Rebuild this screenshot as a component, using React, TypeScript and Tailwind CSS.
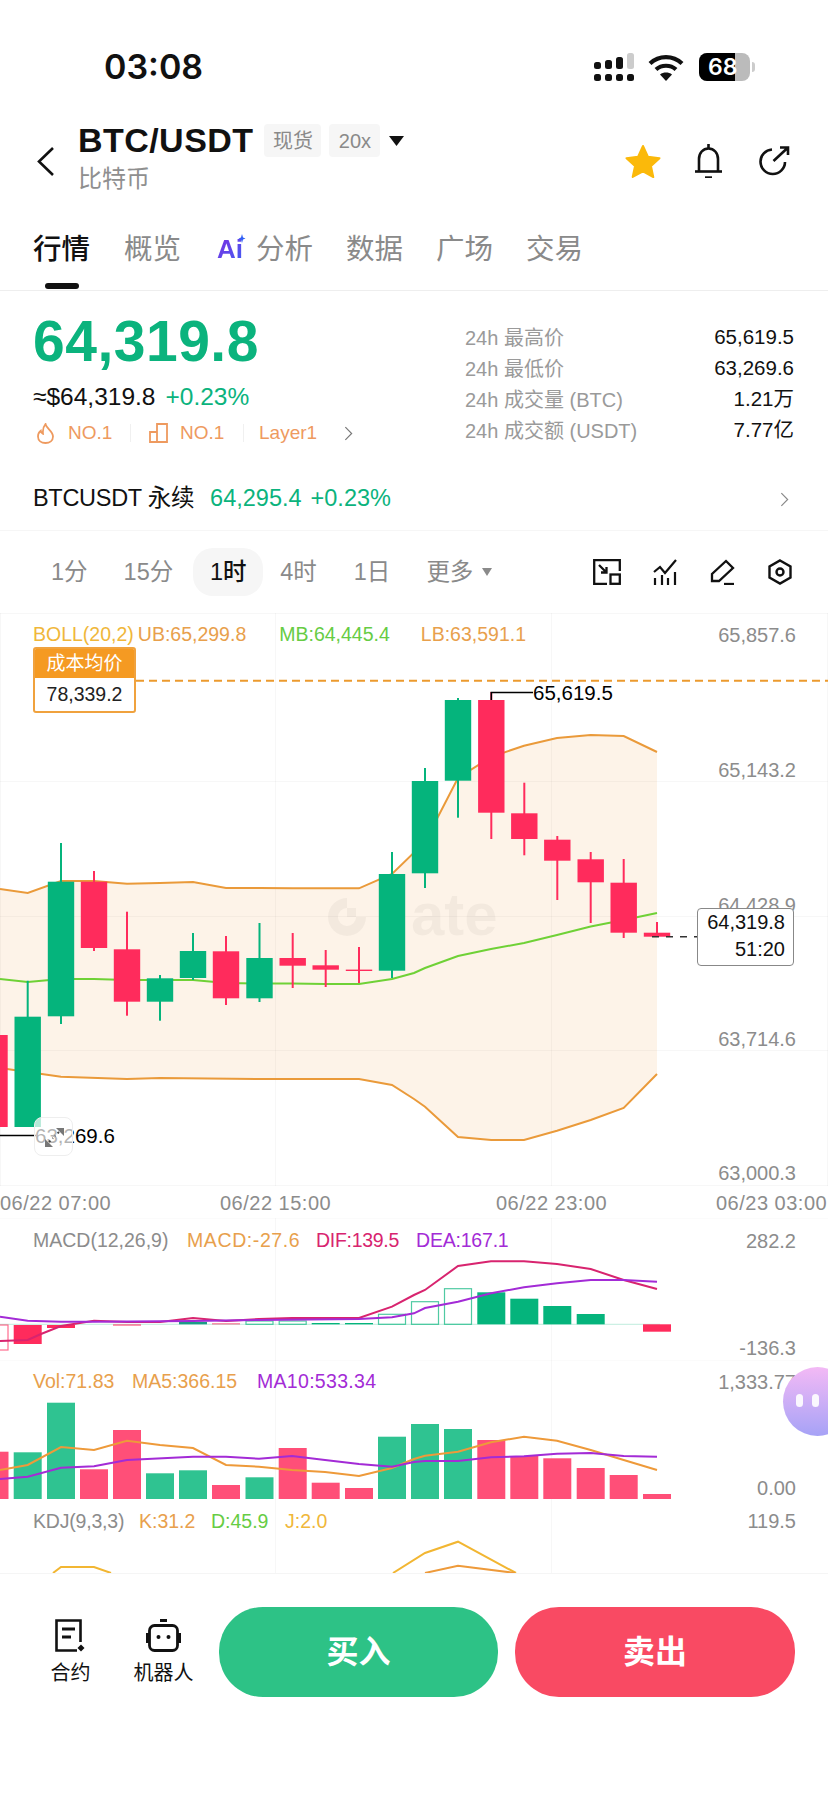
import { ReactNode } from "react";

const GREEN = "#05b47c";
const RED = "#ff2b5c";

// x, up?, bodyTop, bodyBottom, wickTop, wickBottom (page pixels)
const candles: [number, boolean, number, number, number, number][] = [
  [-5.5, false, 1035, 1127, 1030, 1135],
  [27.7, true, 1016.7, 1127, 980.7, 1127],
  [61, true, 881.7, 1016.3, 843, 1024],
  [94, false, 881.7, 948, 871, 951],
  [127, false, 949.3, 1001.7, 911.7, 1015.7],
  [160, true, 978.3, 1001.7, 975, 1020.7],
  [193, true, 951, 978, 933, 980],
  [226, false, 951.3, 998.3, 936, 1005],
  [259.5, true, 958, 998.3, 923, 1002],
  [292.7, false, 958, 965.7, 933, 988],
  [325.7, false, 965.3, 969.7, 950, 987],
  [359, false, 969.6, 971, 947, 983],
  [392, true, 874, 970.7, 852, 978],
  [425, true, 781, 873.3, 768, 888],
  [458, true, 700, 780.7, 698, 817.7],
  [491.3, false, 700, 812.7, 692, 839],
  [524.3, false, 813.3, 839, 782.7, 855.3],
  [557.3, false, 839.7, 860.7, 836, 900],
  [590.7, false, 859.3, 882.3, 852, 923],
  [623.7, false, 882.7, 932.7, 859, 938],
  [657, false, 932.7, 936.7, 922, 937],
];

const upper = "0,889 27.7,893 61,881 94,881 127,883.7 160,883 193,882 226,888 259.5,888 292.7,888.3 325.7,888.3 359,888.3 392,874 425,842 458,778 491,757 524,745.7 557,738 590.7,735 623.7,736 657,752";
const lower = "0,1068 27.7,1072 61,1076.7 127,1079 160,1078 259,1079 359,1079 392,1085 414,1099 425,1106.7 458,1137 491.3,1140 524,1140 557,1130.7 590.7,1120 623.7,1108 657,1074";
const middle = "0,979 27.7,982 61,979 94,979 127,980 160,980 193,980 226,983 259.5,983.5 292,983.5 325,984 359,984 392,979 414,973 425,968 458,956 491,949 524,943 557,935 590.7,926.5 623.7,920 657,913";
const bandFill = upper + " " + lower.split(" ").reverse().join(" ");

const dif = "0,1341 27.7,1340 41,1334 61,1326 94,1320.7 127,1322 160,1322 193,1318 226,1321 259,1319 292,1318 325,1318 359,1318 392,1306.7 414,1295 425,1290 458,1266 491,1261.3 524,1261.3 557,1264 590.7,1269 623.7,1280 657,1289";
const dea = "0,1316.7 27.7,1320.7 61,1321.7 94,1321.7 127,1321.5 193,1321 259,1320 359,1319 392,1317.3 414,1313.3 425,1308 458,1301.7 491,1293.3 524,1287.3 557,1283.3 590.7,1280 623.7,1280 657,1281.7";

// x, colour, top, bottom, hollow
const macdBars: [number, string, number, number, boolean][] = [
  [-5.5, RED, 1325, 1350, true],
  [27.7, RED, 1325, 1344, false],
  [61, RED, 1325, 1328, false],
  [127, RED, 1324.5, 1325.5, false],
  [193, "#1c9c86", 1322, 1324.3, false],
  [226, RED, 1323.5, 1324.3, false],
  [259.5, GREEN, 1321, 1324.3, true],
  [292.7, GREEN, 1321, 1324.3, true],
  [325.7, GREEN, 1323, 1324.3, false],
  [359, GREEN, 1323, 1324.3, false],
  [392, GREEN, 1314.3, 1324.3, true],
  [425, GREEN, 1301.7, 1324.3, true],
  [458, GREEN, 1288.7, 1324.3, true],
  [491.3, GREEN, 1292.3, 1324.3, false],
  [524.3, GREEN, 1298.7, 1324.3, false],
  [557.3, GREEN, 1306, 1324.3, false],
  [590.7, GREEN, 1314, 1324.3, false],
  [657, RED, 1324.3, 1331.7, false],
];

const volGreen = "#2fc391";
const volRed = "#ff4f78";
const volBars: [number, string, number][] = [
  [-5.5, volRed, 1451.7], [27.7, volGreen, 1452.3], [61, volGreen, 1402.7], [94, volRed, 1469.3],
  [127, volRed, 1430], [160, volGreen, 1473.3], [193, volGreen, 1470.3], [226, volRed, 1485],
  [259.5, volGreen, 1477.3], [292.7, volRed, 1448], [325.7, volRed, 1482.7], [359, volRed, 1488],
  [392, volGreen, 1436.7], [425, volGreen, 1424], [458, volGreen, 1429], [491.3, volRed, 1440],
  [524.3, volRed, 1456], [557.3, volRed, 1458.3], [590.7, volRed, 1468], [623.7, volRed, 1475], [657, volRed, 1494],
];

const ma5 = "0,1470 27.7,1465 61,1447 94,1450 127,1440.7 160,1445 193,1448 226,1465 259,1466.7 292,1470 325,1472 359,1476 392,1468 414,1459 425,1455.7 458,1451.7 491,1442.3 524,1436.7 557,1440.7 590.7,1450 623.7,1460 657,1470";
const ma10 = "0,1479 27.7,1476.7 61,1467.7 94,1466.3 127,1460 193,1456.7 226,1456.7 259,1458.7 292,1456 325,1460 359,1464 392,1466.7 414,1462 425,1461 458,1461 491,1457.3 524,1456.3 557,1453.7 590.7,1453 623.7,1456 657,1456.7";

const stats = [
  ["24h 最高价", "65,619.5"],
  ["24h 最低价", "63,269.6"],
  ["24h 成交量 (BTC)", "1.21万"],
  ["24h 成交额 (USDT)", "7.77亿"],
];

const ChartDrawing = () => (
  <svg className="absolute left-0 top-0" width="828" height="960" viewBox="0 613 828 960" fill="none">
    <polygon points={bandFill} fill="#fdf3e8" />
    {/* grid */}
    <g stroke="#000" strokeOpacity="0.03" strokeWidth="1">
      <path d="M0 613.5H828M0 781.5H828M0 916.5H828M0 1050.5H828M0 1185.5H828" />
      <path d="M275.5 613V1186M551.5 613V1186M275.5 1218V1573M551.5 1218V1573M0.5 613V1186M827.5 613V1186" />
      <path d="M0 1218.5H828M0 1360.5H828" strokeOpacity="0.015" />
    </g>
    {/* watermark */}
    <g opacity="0.035">
      <path d="M347 898a19 19 0 1 0 19 19h-10a9 9 0 1 1-9-9z" fill="#000" />
      <rect x="347" y="908" width="9" height="9" fill="#000" />
      <text x="411" y="935" fontFamily="Liberation Sans" fontWeight="700" fontSize="60" fill="#000">ate</text>
    </g>
    <polyline points={upper} stroke="#ea9a3a" strokeWidth="2" />
    <polyline points={lower} stroke="#ea9a3a" strokeWidth="2" />
    <polyline points={middle} stroke="#6fd136" strokeWidth="2" />
    {candles.map(([x, up, top, bottom, wickTop, wickBottom]) => (
      <g key={x} fill={up ? GREEN : RED}>
        <rect x={x - 1} y={wickTop} width="2" height={wickBottom - wickTop} />
        <rect x={x - 13.2} y={top} width="26.4" height={bottom - top} />
      </g>
    ))}
    {/* cost line, last price, high and low markers */}
    <path d="M136 680.7H828" stroke="#ec9a2e" strokeWidth="2" strokeDasharray="8 5" />
    <path d="M652 936.7H697" stroke="#333" strokeWidth="1.5" strokeDasharray="7 7" />
    <path d="M491.3 700V692.5H533" stroke="#000" strokeWidth="1.5" />
    <path d="M0 1135.5H36" stroke="#000" strokeWidth="1.5" />

    {/* MACD */}
    <path d="M0 1324.3H660" stroke={GREEN} strokeOpacity="0.25" />
    {macdBars.map(([x, color, top, bottom, hollow]) =>
      hollow ? (
        <rect key={x} x={x - 13.5} y={top} width="27" height={bottom - top} stroke={color} strokeOpacity="0.7" strokeWidth="1.2" />
      ) : (
        <rect key={x} x={x - 14} y={top} width="28" height={bottom - top} fill={color} />
      )
    )}
    <polyline points={dif} stroke="#d8246f" strokeWidth="2" />
    <polyline points={dea} stroke="#a32bd6" strokeWidth="2" />

    {/* Vol */}
    {volBars.map(([x, color, top]) => (
      <rect key={x} x={x - 14} y={top} width="28" height={1499 - top} fill={color} />
    ))}
    <polyline points={ma5} stroke="#ee9a3a" strokeWidth="2" />
    <polyline points={ma10} stroke="#a32bd6" strokeWidth="2" />

    {/* KDJ */}
    <polyline points="53,1573 61,1567 94,1567 111,1573" stroke="#f2b632" strokeWidth="2" />
    <polyline points="393,1573 425,1553 458,1541.7 516,1573" stroke="#f2b632" strokeWidth="2" />
    <polyline points="425,1573 458,1565.7 515,1573" stroke="#ee9a3a" strokeWidth="2" />
  </svg>
);

const AxisLabel = ({ top, children }: { top: number; children: ReactNode }) => (
  <span className="absolute right-[32px] h-6 leading-6 text-[20px] text-[#8c8c8c]" style={{ top }}>
    {children}
  </span>
);

const Chevron = ({ className }: { className: string }) => (
  <svg className={className} viewBox="0 0 10 16" fill="none" stroke="currentColor" strokeWidth="1.3">
    <path d="M1.5 1l7 7-7 7" />
  </svg>
);

const App = () => {
  return (
    <div className="relative w-[828px] h-[1801px] overflow-hidden bg-white text-[#111] font-['Liberation_Sans','Noto_Sans_CJK_SC',sans-serif]">
      {/* status bar */}
      <div className="h-[81px] pt-[53px] pl-[104px] pr-[73px] flex items-center justify-between">
        <span className="text-[34px] leading-[30px] font-semibold font-['Inter','Liberation_Sans',sans-serif]">03:08</span>
        <div className="flex items-center">
          <svg width="40" height="28" viewBox="0 0 40 28" fill="#111">
            <rect x="0" y="9" width="7" height="7" rx="2.5" />
            <rect x="11" y="7" width="7" height="9" rx="2.5" />
            <rect x="22" y="4" width="7" height="12" rx="2.5" />
            <rect x="33" y="0" width="7" height="16" rx="2.5" fill="#ccc" />
            <rect x="0" y="21" width="7" height="7" rx="2.5" />
            <rect x="11" y="21" width="7" height="7" rx="2.5" />
            <rect x="22" y="21" width="7" height="7" rx="2.5" />
            <rect x="33" y="21" width="7" height="7" rx="2.5" />
          </svg>
          <svg className="ml-[14px]" width="36" height="27" viewBox="0 0 36 27" fill="none" stroke="#111" strokeWidth="4.2">
            <path d="M2 9.5C11 1 25 1 34 9.5" />
            <path d="M8 15.5C13.5 10.5 22.5 10.5 28 15.5" />
            <path d="M18 27l-6-6.5c3.5-2.6 8.5-2.6 12 0z" fill="#111" stroke="none" />
          </svg>
          <div className="ml-[15px] flex items-center">
            <div className="relative w-[51px] h-[28px] rounded-[8px] bg-[#bbb] overflow-hidden">
              <div className="w-[36px] h-full bg-black" />
              <span className="absolute left-[9px] top-0 leading-[28px] text-[23px] font-semibold text-white font-['Inter','Liberation_Sans',sans-serif]">68</span>
            </div>
            <div className="ml-[2px] w-[3px] h-[10px] rounded-r-sm bg-[#ccc]" />
          </div>
        </div>
      </div>

      {/* header */}
      <div className="mt-[43px] h-[67px] flex items-start">
        <svg className="ml-[37px] mt-[23px]" width="17" height="29" viewBox="0 0 17 29" fill="none" stroke="#111" strokeWidth="2.6">
          <path d="M16 1L2 14.5 16 28" />
        </svg>
        <div className="ml-[24px]">
          <div className="flex items-center h-[33px]">
            <span className="text-[34px] leading-[33px] font-bold tracking-[0.45px]">BTC/USDT</span>
            <span className="ml-[11px] w-[57px] h-[33px] flex items-center justify-center bg-[#f6f6f6] rounded text-[20px] text-[#8a8a8a]">现货</span>
            <span className="ml-[8px] w-[51px] h-[33px] flex items-center justify-center bg-[#f6f6f6] rounded text-[20px] text-[#8a8a8a]">20x</span>
            <svg className="ml-[9px]" width="15" height="10" viewBox="0 0 15 10" fill="#111">
              <path d="M0 0h15L7.5 10z" />
            </svg>
          </div>
          <div className="mt-[9px] text-[24px] leading-[25px] text-[#8f8f8f]">比特币</div>
        </div>
        <div className="ml-auto mr-[38px] mt-[20px] flex items-center">
          <svg width="36" height="34" viewBox="0 0 36 34" fill="#fbb90a" stroke="#fbb90a" strokeWidth="2" strokeLinejoin="round">
            <path d="M18 2l5 10.8 11.5 1.4-8.5 7.9 2.3 11-10.3-5.8L7.7 33 10 22.100 1.500 14.200l11.500-1.400z" />
          </svg>
          <svg className="ml-[33px]" width="29" height="34" viewBox="0 0 29 34" fill="none" stroke="#111" strokeWidth="2.6">
            <path d="M1 27.500h27" />
            <path d="M5 27.500V15c0-6 4-10.500 9.500-10.500S24 9 24 15v12.500" />
            <path d="M14.500 0v4.500" />
            <path d="M11 33.500h7" strokeWidth="2.400" />
          </svg>
          <svg className="ml-[36px]" width="31" height="30" viewBox="0 0 31 30" fill="none" stroke="#111" strokeWidth="2.600">
            <path d="M13 3.500C6.500 4 1.500 9.300 1.500 15.700 1.500 22.500 7 28 13.800 28 20.600 28 26 22.500 26 16" />
            <path d="M14.500 15L29 1.500M21 1.500h8V9" />
          </svg>
        </div>
      </div>

      {/* tabs */}
      <div className="relative h-[100px] pt-[43px] pl-[33px] border-b border-[#eeeeee] flex items-start text-[28.5px] leading-[30px] text-[#8a8a8a]">
        <span className="relative w-[57px] text-[#111] font-medium">
          行情
          <span className="absolute left-[12px] top-[49px] w-[34px] h-[6px] rounded-full bg-[#111]" />
        </span>
        <span className="ml-[34px]">概览</span>
        <span className="ml-[36px] relative w-[29px] text-[26px] font-bold bg-linear-to-br from-[#7a25e0] to-[#2f5ff5] bg-clip-text text-transparent">
          Ai
          <svg className="absolute right-0 top-0" width="8" height="9" viewBox="0 0 7 9" fill="#2f5ff5">
            <path d="M3.500 0l1 3.500L7 4.500 4.500 5.500l-1 3.500-1-3.500L0 4.500l2.500-1z" />
          </svg>
        </span>
        <span className="ml-[10px]">分析</span>
        <span className="ml-[33px]">数据</span>
        <span className="ml-[33px]">广场</span>
        <span className="ml-[33px]">交易</span>
      </div>

      {/* price block */}
      <div className="pt-[22px] pl-[33px] pr-[34px] flex justify-between">
        <div>
          <div className="h-[56px] text-[57px] leading-[56px] font-bold text-[#0bb37d] tracking-[0.5px]">64,319.8</div>
          <div className="mt-[13px] h-[30px] flex items-center text-[24.5px]">
            <span>≈$64,319.8</span>
            <span className="ml-[10px] text-[#0bb37d]">+0.23%</span>
          </div>
          <div className="mt-[8px] h-[26px] flex items-center text-[19px] text-[#ee9a5f]">
            <svg className="ml-[4px]" width="17" height="21" viewBox="0 0 17 21" fill="none" stroke="#ee9a5f" strokeWidth="1.800">
              <path d="M8.500 1C9 5 16 8 16 13.500 16 17.500 12.700 20 8.500 20S1 17.500 1 13.500C1 11 2.300 9 3.800 7.800 4 9.500 5 10.500 6 10.800 5.500 7 6.500 3.500 8.500 1z" />
            </svg>
            <span className="ml-[14px] w-[42px]">NO.1</span>
            <span className="ml-[20px] w-px h-[18px] bg-[#f0f0f0]" />
            <svg className="ml-[18px]" width="19" height="20" viewBox="0 0 19 20" fill="none" stroke="#ee9a5f" strokeWidth="1.800">
              <path d="M1 9h7v10H1zM8 19V1h10v18z" />
            </svg>
            <span className="ml-[12px] w-[43px]">NO.1</span>
            <span className="ml-[20px] w-px h-[18px] bg-[#f0f0f0]" />
            <span className="ml-[15px] w-[59px]">Layer1</span>
            <Chevron className="ml-[26px] w-[9px] h-[15px] text-[#777]" />
          </div>
        </div>
        <div className="w-[329px] pt-[9px]">
          {stats.map(([label, value]) => (
            <div key={label} className="h-[31px] flex items-center justify-between">
              <span className="text-[20px] text-[#9a9a9a]">{label}</span>
              <span className="text-[20.5px]">{value}</span>
            </div>
          ))}
        </div>
      </div>

      {/* perpetual row */}
      <div className="mt-[33px] h-[40px] pl-[33px] pr-[39px] flex items-center text-[23.5px]">
        <span className="tracking-[-0.3px]">BTCUSDT 永续</span>
        <span className="ml-[16px] text-[#0bb37d]">64,295.4</span>
        <span className="ml-[9px] text-[#0bb37d]">+0.23%</span>
        <Chevron className="ml-auto w-[9px] h-[15px] text-[#888]" />
      </div>

      {/* period selector */}
      <div className="mt-[11px] border-t border-[#f6f6f6] pt-[17px] pb-[17px] flex items-center text-[23.5px] leading-[48px] text-[#8a8a8a]">
        <span className="ml-[51px]">1分</span>
        <span className="ml-[36px]">15分</span>
        <span className="ml-[20px] w-[70px] h-[48px] rounded-[20px] bg-[#f6f6f6] text-center text-[#111] font-medium">1时</span>
        <span className="ml-[17px]">4时</span>
        <span className="ml-[37px]">1日</span>
        <span className="ml-[36px]">更多</span>
        <svg className="ml-[9px]" width="10" height="8" viewBox="0 0 10 8" fill="#8a8a8a">
          <path d="M0 0h10L5 8z" />
        </svg>
        <svg className="ml-[101px]" width="28" height="26" viewBox="0 0 28 26" fill="none" stroke="#111" strokeWidth="2.300">
          <path d="M14 25H1.200V1.200h25.600V12" />
          <path d="M6 6l7.500 7.500M13.500 8v5.500H8" />
          <rect x="17.500" y="15.500" width="9.300" height="9.300" />
        </svg>
        <svg className="ml-[32px]" width="24" height="26" viewBox="0 0 24 26" fill="none" stroke="#111" strokeWidth="2.200">
          <path d="M1 13l6-5 5 6L23 1" />
          <path d="M2 19v7M9 16v10M15 19v7M22 13v13" />
        </svg>
        <svg className="ml-[33px]" width="25" height="26" viewBox="0 0 25 26" fill="none" stroke="#111" strokeWidth="2.300">
          <path d="M16 2l7 7L9 22H2v-7z" />
          <path d="M14 25h10" />
        </svg>
        <svg className="ml-[33px]" width="24" height="26" viewBox="0 0 24 26" fill="none" stroke="#111" strokeWidth="2.400">
          <path d="M12 1.500l10.500 6v11L12 24.500l-10.500-6v-11z" />
          <circle cx="12" cy="13" r="3.500" />
        </svg>
      </div>

      {/* charts */}
      <div className="relative h-[960px] text-[19.500px]">
        <ChartDrawing />

        <div className="relative h-[573px] pt-[9px]">
          <div className="pl-[33px] h-6 leading-6 flex">
            <span className="text-[#f0b73a]">BOLL(20,2)</span>
            <span className="ml-[4px] text-[#e8a04c]">UB:65,299.8</span>
            <span className="ml-[33px] text-[#66cc44]">MB:64,445.4</span>
            <span className="ml-[31px] text-[#e8a04c]">LB:63,591.1</span>
          </div>
          <div className="absolute left-[33px] top-[34px] w-[103px] h-[66px] rounded-[3px] border-2 border-[#f0a23e] bg-white text-center overflow-hidden">
            <div className="h-[31px] -mt-[2px] pt-px bg-[#f59a22] text-white text-[19px] leading-[32px]">成本均价</div>
            <div className="leading-[33px] text-[19.500px] text-[#222]">78,339.2</div>
          </div>
          <AxisLabel top={10}>65,857.6</AxisLabel>
          <AxisLabel top={145}>65,143.2</AxisLabel>
          <AxisLabel top={280}>64,428.9</AxisLabel>
          <AxisLabel top={414}>63,714.6</AxisLabel>
          <AxisLabel top={548}>63,000.3</AxisLabel>
          <span className="absolute left-[533px] top-[68px] h-6 leading-6 text-[20.500px] text-black">65,619.5</span>
          <span className="absolute left-[35px] top-[511px] h-6 leading-6 text-[20.500px] text-black">63,269.6</span>
          <div className="absolute left-[34px] top-[504px] w-[39px] h-[39px] rounded-lg border border-[#eeeeee] bg-white/70 flex items-center justify-center">
            <svg width="24" height="24" viewBox="0 0 24 24" fill="#777">
              <path d="M14 3h8v8zM3 14v8h8z" />
              <path d="M17 7l-4 4M7 17l4-4" stroke="#444" strokeWidth="2" strokeDasharray="2 3" />
            </svg>
          </div>
          <div className="absolute left-[697px] top-[295px] w-[97px] h-[58px] rounded-[4px] border border-[#888] bg-white pr-[8px] text-right text-[20px] leading-[27px] text-[#111]">
            <div>64,319.8</div>
            <div>51:20</div>
          </div>
        </div>

        <div className="relative h-[32px] leading-[34px] flex text-[20px] text-[#8c8c8c] tracking-[0.500px]">
          <span className="w-[220px]">06/22 07:00</span>
          <span className="w-[276px]">06/22 15:00</span>
          <span className="w-[220px]">06/22 23:00</span>
          <span>06/23 03:00</span>
        </div>

        <div className="relative h-[142px] pt-[10px]">
          <div className="pl-[33px] h-6 leading-6 flex">
            <span className="w-[154px] text-[#8c8c8c]">MACD(12,26,9)</span>
            <span className="w-[129px] tracking-[0.6px] text-[#e8a04c]">MACD:-27.6</span>
            <span className="w-[100px] tracking-[-0.3px] text-[#d8246f]">DIF:139.5</span>
            <span className="tracking-[-0.2px] text-[#a32bd6]">DEA:167.1</span>
          </div>
          <AxisLabel top={11}>282.2</AxisLabel>
          <AxisLabel top={118}>-136.3</AxisLabel>
        </div>

        <div className="relative h-[145px] pt-[9px]">
          <div className="pl-[33px] h-6 leading-6 flex">
            <span className="w-[99px] text-[#e8a04c]">Vol:71.83</span>
            <span className="w-[125px] text-[#e8a04c]">MA5:366.15</span>
            <span className="tracking-[0.3px] text-[#a32bd6]">MA10:533.34</span>
          </div>
          <AxisLabel top={10}>1,333.77</AxisLabel>
          <AxisLabel top={116}>0.00</AxisLabel>
        </div>

        <div className="relative h-[68px] pt-[4px]">
          <div className="pl-[33px] h-6 leading-6 flex">
            <span className="w-[106px] text-[#8c8c8c] tracking-[-0.2px]">KDJ(9,3,3)</span>
            <span className="w-[72px] text-[#e8a04c]">K:31.2</span>
            <span className="w-[74px] text-[#66cc44]">D:45.9</span>
            <span className="text-[#f0b73a]">J:2.0</span>
          </div>
          <AxisLabel top={4}>119.5</AxisLabel>
        </div>
      </div>

      {/* floating assistant */}
      <div className="absolute left-[783px] top-[1367px] w-[69px] h-[69px] rounded-full bg-linear-to-b from-[#f3b9f5] to-[#a6a2f6]">
        <span className="absolute left-[13px] top-[27px] w-[7px] h-[13px] rounded-full bg-white/90" />
        <span className="absolute left-[29px] top-[27px] w-[7px] h-[13px] rounded-full bg-white/90" />
      </div>

      {/* bottom actions */}
      <div className="relative bg-white border-t border-[#f5f5f5] h-[228px] pt-[33px] pl-[50px] flex items-start">
        <div className="w-[41px] pt-[12px] flex flex-col items-center">
          <svg width="31" height="33" viewBox="0 0 31 33" fill="none" stroke="#111" strokeWidth="2.600">
            <path d="M22 31.500H1.500V1.500h24V23" />
            <path d="M7 10h13M7 18h9" strokeWidth="3" />
            <path d="M26 25.500l3.500 3.500-3.500 3.500-3.500-3.500z" fill="#111" stroke="none" />
          </svg>
          <span className="mt-[9px] text-[20px] leading-6 whitespace-nowrap">合约</span>
        </div>
        <div className="ml-[42px] w-[61px] pt-[12px] flex flex-col items-center">
          <svg width="35" height="33" viewBox="0 0 35 33" fill="none" stroke="#111" strokeWidth="2.800">
            <rect x="14" y="0" width="7" height="3" fill="#111" stroke="none" />
            <rect x="3.500" y="6.500" width="28" height="25" rx="5" />
            <rect x="0" y="14" width="3" height="10" fill="#111" stroke="none" />
            <rect x="32" y="14" width="3" height="10" fill="#111" stroke="none" />
            <circle cx="12.500" cy="18" r="2" fill="#111" stroke="none" />
            <circle cx="22.500" cy="18" r="2" fill="#111" stroke="none" />
          </svg>
          <span className="mt-[9px] text-[20px] leading-6 whitespace-nowrap">机器人</span>
        </div>
        <button className="ml-[25px] w-[279px] h-[90px] rounded-[44px] bg-[#2dc286] text-white text-[32px] font-bold">买入</button>
        <button className="ml-[17px] w-[280px] h-[90px] rounded-[44px] bg-[#f94a63] text-white text-[32px] font-bold">卖出</button>
      </div>
    </div>
  );
};

export default App;
